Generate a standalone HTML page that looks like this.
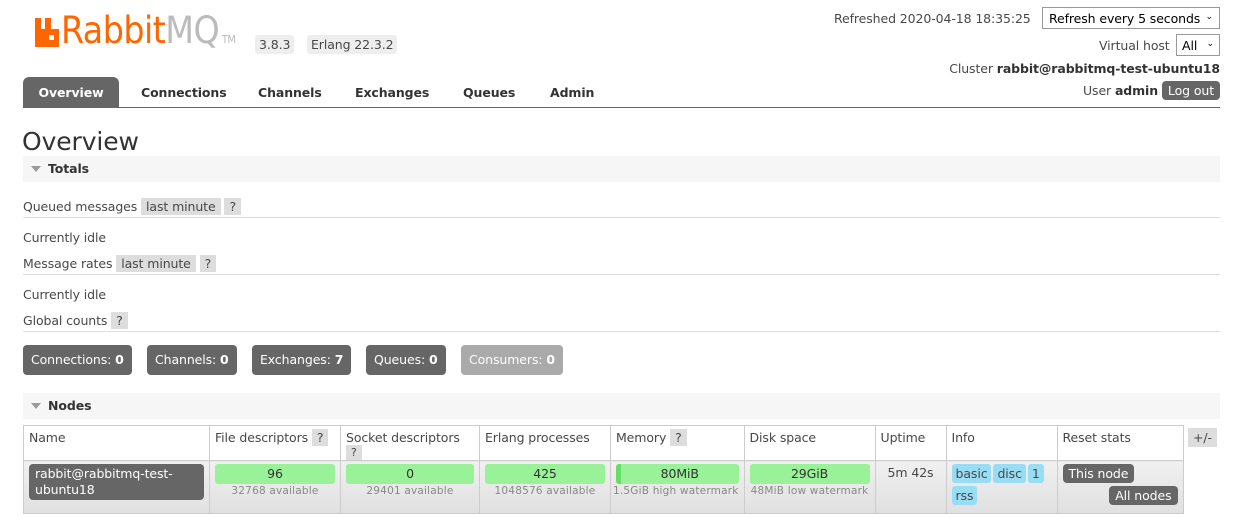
<!DOCTYPE html>
<html><head><style>
*{margin:0;padding:0;box-sizing:border-box}
body{width:1239px;height:524px;background:#fff;font-family:"DejaVu Sans","Liberation Sans",sans-serif;font-size:12.5px;color:#484848;position:relative;overflow:hidden;letter-spacing:-0.1px}
.a{position:absolute;white-space:nowrap}
.pill{background:#eee;border-radius:3px;padding:2px 4px}
.q{background:#ddd;padding:1px 5px}
.tab{position:absolute;top:77px;height:31px;line-height:31px;font-weight:bold;color:#333;font-size:12.5px}
.hr{position:absolute;left:23px;width:1197px;height:1px;background:#ddd}
.sec{position:absolute;left:23px;width:1197px;height:26px;background:#f6f6f6;font-weight:bold;line-height:26px;padding-left:25px;color:#333}
.sec:before{content:"";position:absolute;left:8px;top:10px;border:5px solid transparent;border-top:6px solid #999}
.cnt{position:absolute;top:345px;height:30px;line-height:30px;background:#666;color:#fff;border-radius:4px;padding:0 8px}
table{position:absolute;left:23px;top:425px;border-collapse:collapse}
td{border:1px solid #ccc;vertical-align:top;padding:4px 5px;line-height:15px}
tr.h td{background:#fff;height:35px;position:relative}
tr.r td{background:linear-gradient(#f0f0f0,#e0e0e0);height:53px;padding-top:3px}
.bar{background:#99f298;border-radius:3px;height:20px;text-align:center;line-height:20px;color:#333}
.sub{font-size:10.5px;color:#888;text-align:center;margin-top:0px;letter-spacing:0.2px}
.tag{background:#99ddf5;border-radius:3px;padding:2px 4px;display:inline-block;margin:0 2px 3px 0}
.btn{background:#666;color:#fff;border-radius:4px;padding:2px 6px;display:inline-block}
</style></head><body>
<div class="a" style="left:35px;top:18px;width:24px;height:29px">
<svg width="24" height="29" viewBox="0 0 24 29"><path d="M0 0h6v11h4V0h6v11h8v18H0z" fill="#f60"/><rect x="14" y="17" width="5" height="5" fill="#fff"/></svg></div>
<div class="a" style="left:61px;top:9px;font-size:37px;color:#f60;letter-spacing:-0.5px;font-family:'DejaVu Sans Condensed','DejaVu Sans',sans-serif">Rabbit<span style="color:#bbb">MQ</span><span style="color:#bbb;font-size:11px"> TM</span></div>
<div class="a pill" style="left:255px;top:35px">3.8.3</div>
<div class="a pill" style="left:307px;top:35px">Erlang 22.3.2</div>

<div class="a" style="left:834px;top:11px">Refreshed 2020-04-18 18:35:25</div>
<div class="a" style="left:1042px;top:7px;width:178px;height:22px;border:1px solid #999;padding:3px 6px;color:#000">Refresh every 5 seconds<span style="position:absolute;right:6px;font-size:9px;top:4px">&#8964;</span></div>
<div class="a" style="left:1099px;top:38px">Virtual host</div>
<div class="a" style="left:1176px;top:34px;width:44px;height:22px;border:1px solid #999;padding:3px 5px;color:#000">All<span style="position:absolute;right:5px;font-size:9px;top:4px">&#8964;</span></div>
<div class="a" style="right:19px;top:61px">Cluster <b style="color:#333">rabbit@rabbitmq-test-ubuntu18</b></div>
<div class="a" style="right:19px;top:81px">User <b style="color:#333">admin</b> <span class="btn" style="padding:2px 6px">Log out</span></div>

<div class="tab" style="left:23px;width:96px;background:#666;color:#fff;border-radius:6px 6px 0 0;text-align:center">Overview</div>
<div class="tab" style="left:141px">Connections</div>
<div class="tab" style="left:258px">Channels</div>
<div class="tab" style="left:355px">Exchanges</div>
<div class="tab" style="left:463px">Queues</div>
<div class="tab" style="left:550px">Admin</div>
<div class="a" style="left:23px;top:107px;width:1197px;height:1px;background:#666"></div>

<div class="a" style="left:22px;top:127px;font-size:25px;color:#333">Overview</div>
<div class="sec" style="top:156px">Totals</div>
<div class="a" style="left:23px;top:199px">Queued messages <span class="q">last minute</span> <span class="q">?</span></div>
<div class="hr" style="top:217px"></div>
<div class="a" style="left:23px;top:230px">Currently idle</div>
<div class="a" style="left:23px;top:256px">Message rates <span class="q">last minute</span> <span class="q">?</span></div>
<div class="hr" style="top:274px"></div>
<div class="a" style="left:23px;top:287px">Currently idle</div>
<div class="a" style="left:23px;top:313px">Global counts <span class="q">?</span></div>
<div class="hr" style="top:331px"></div>
<div class="cnt" style="left:23px">Connections: <b>0</b></div>
<div class="cnt" style="left:147px">Channels: <b>0</b></div>
<div class="cnt" style="left:252px">Exchanges: <b>7</b></div>
<div class="cnt" style="left:366px">Queues: <b>0</b></div>
<div class="cnt" style="left:461px;background:#aaa">Consumers: <b>0</b></div>
<div class="sec" style="top:393px">Nodes</div>

<table>
<tr class="h"><td style="width:186px">Name</td><td style="width:131px">File descriptors <span class="q">?</span></td><td style="width:139px">Socket descriptors<span class="q" style="font-size:11px;position:absolute;left:5px;top:19px;line-height:13px">?</span></td><td style="width:131px">Erlang processes</td><td style="width:131px">Memory <span class="q">?</span></td><td style="width:131px">Disk space</td><td style="width:71px">Uptime</td><td style="width:111px">Info</td><td style="width:126px">Reset stats</td></tr>
<tr class="r"><td><div class="btn" style="display:block;padding:2px 6px;line-height:16px;white-space:normal">rabbit@rabbitmq-test-<br>ubuntu18</div></td>
<td><div class="bar">96</div><div class="sub">32768 available</div></td>
<td><div class="bar">0</div><div class="sub">29401 available</div></td>
<td><div class="bar">425</div><div class="sub">1048576 available</div></td>
<td><div class="bar" style="border-left:5px solid #6d6">80MiB</div><div class="sub" style="white-space:nowrap;margin-left:-3px">1.5GiB high watermark</div></td>
<td><div class="bar">29GiB</div><div class="sub">48MiB low watermark</div></td>
<td style="text-align:center;padding-top:4px">5m 42s</td>
<td><span class="tag">basic</span><span class="tag">disc</span><span class="tag">1</span><br><span class="tag">rss</span></td>
<td><span class="btn">This node</span><br><span class="btn" style="float:right;margin-top:3px">All nodes</span></td></tr>
</table>
<div class="a q" style="left:1188px;top:428px;padding:2px 5px">+/-</div>
</body></html>
